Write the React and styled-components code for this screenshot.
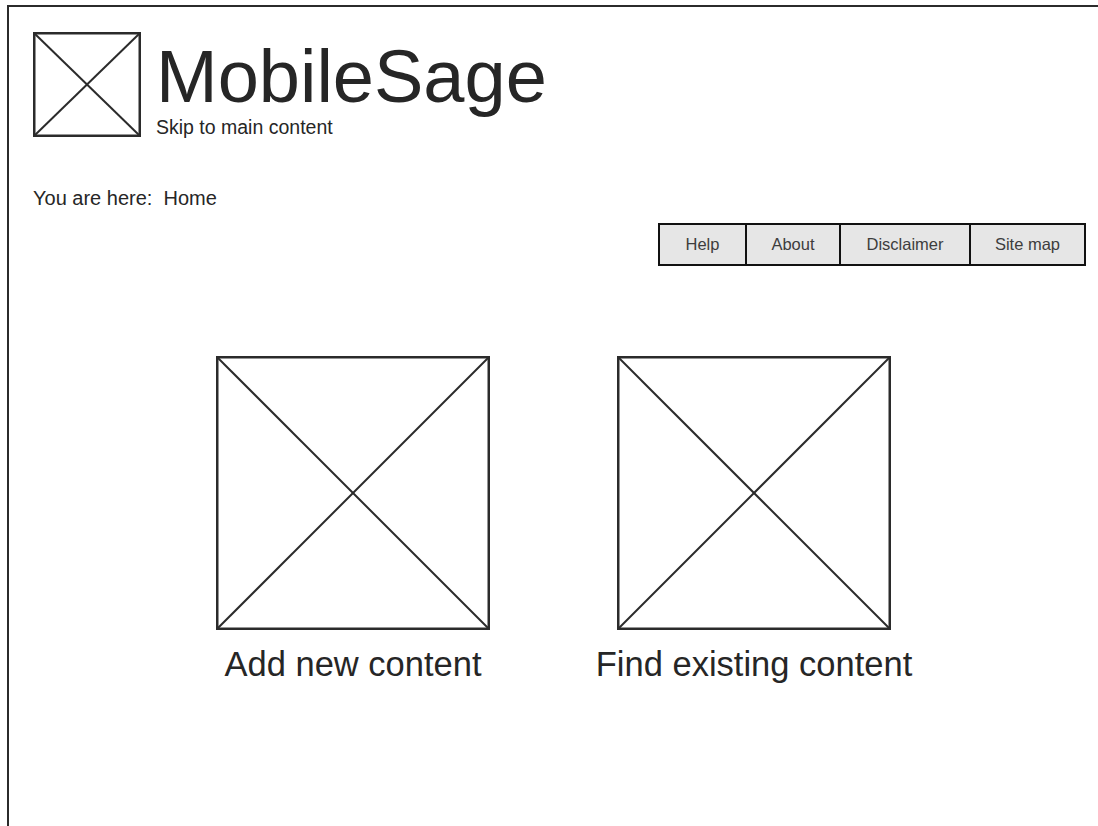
import React from "react";
import styled, { createGlobalStyle } from "styled-components";

const Global = createGlobalStyle`
  html, body {
    margin: 0;
    padding: 0;
    background: #ffffff;
    overflow: hidden;
  }
  body {
    font-family: "Liberation Sans", Arial, sans-serif;
    color: #262626;
  }
`;

const Frame = styled.div`
  margin: 5px 0 0 7px;
  width: 1200px;
  height: 900px;
  border: 2px solid #2b2b2b;
  box-sizing: border-box;
  display: flex;
  flex-direction: column;
`;

const Header = styled.header`
  display: flex;
  align-items: flex-start;
  padding: 25px 0 0 24px;
`;

const Placeholder = styled.svg`
  display: block;
  flex: none;
`;

const TitleBlock = styled.div`
  display: flex;
  flex-direction: column;
  margin-left: 15px;
`;

const Title = styled.h1`
  margin: 9px 0 0 0;
  font-size: 74px;
  line-height: 72px;
  font-weight: normal;
  color: #262626;
`;

const SkipLink = styled.a`
  font-size: 19.5px;
  line-height: 22px;
  color: #262626;
  text-decoration: none;
  margin-top: 3px;
`;

const Breadcrumb = styled.div`
  margin: 48px 0 0 24px;
  font-size: 20px;
  line-height: 24px;
  color: #262626;
  white-space: pre;
`;

const NavRow = styled.nav`
  display: flex;
  justify-content: flex-end;
  padding-right: 119px;
  margin-top: 13px;
`;

const NavList = styled.ul`
  display: flex;
  list-style: none;
  margin: 0;
  padding: 0;
  border: 2px solid #111;
`;

const NavItem = styled.li`
  width: ${(p) => p.$w}px;
  height: 39px;
  display: flex;
  align-items: center;
  justify-content: center;
  background: #e6e6e6;
  font-size: 16.5px;
  color: #3d3d3d;
  box-sizing: border-box;
  & + & {
    border-left: 2px solid #111;
  }
`;

const Cards = styled.main`
  display: flex;
  gap: 127px;
  padding-left: 207px;
  margin-top: 90px;
`;

const Card = styled.a`
  width: 274px;
  display: flex;
  flex-direction: column;
  align-items: center;
  text-decoration: none;
  color: #262626;
`;

const CardLabel = styled.span`
  margin-top: 13px;
  font-size: 34.5px;
  line-height: 42px;
  white-space: nowrap;
`;

function CrossBox({ w, h }) {
  return (
    <Placeholder width={w} height={h} viewBox={`0 0 ${w} ${h}`}>
      <rect x="1.25" y="1.25" width={w - 2.5} height={h - 2.5} fill="#fff" stroke="#2b2b2b" strokeWidth="2.5" />
      <line x1="1.5" y1="1.5" x2={w - 1.5} y2={h - 1.5} stroke="#2b2b2b" strokeWidth="2" />
      <line x1={w - 1.5} y1="1.5" x2="1.5" y2={h - 1.5} stroke="#2b2b2b" strokeWidth="2" />
    </Placeholder>
  );
}

const links = [
  { label: "Help", w: 85 },
  { label: "About", w: 94 },
  { label: "Disclaimer", w: 130 },
  { label: "Site map", w: 115 },
];

export default function App() {
  return (
    <>
      <Global />
      <Frame>
        <Header>
          <CrossBox w={108} h={105} />
          <TitleBlock>
            <Title>MobileSage</Title>
            <SkipLink href="#main">Skip to main content</SkipLink>
          </TitleBlock>
        </Header>
        <Breadcrumb>{"You are here:  Home"}</Breadcrumb>
        <NavRow>
          <NavList>
            {links.map((l) => (
              <NavItem key={l.label} $w={l.w}>
                {l.label}
              </NavItem>
            ))}
          </NavList>
        </NavRow>
        <Cards id="main">
          <Card href="#add">
            <CrossBox w={274} h={274} />
            <CardLabel>Add new content</CardLabel>
          </Card>
          <Card href="#find">
            <CrossBox w={274} h={274} />
            <CardLabel>Find existing content</CardLabel>
          </Card>
        </Cards>
      </Frame>
    </>
  );
}
